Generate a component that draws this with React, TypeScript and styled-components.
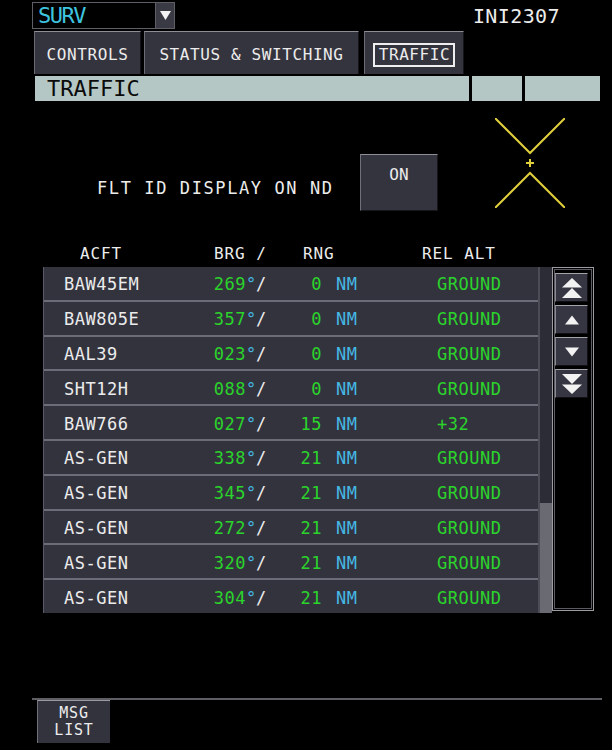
import React from 'react';
import styled, { createGlobalStyle } from 'styled-components';

const GlobalStyle = createGlobalStyle`
  html, body {
    margin: 0;
    padding: 0;
    background: #000;
  }
  body {
    font-family: "DejaVu Sans Mono", "Liberation Mono", monospace;
  }
`;

const GREEN = '#2bd42b';
const CYAN = '#45b9e4';

const Screen = styled.div`
  width: 612px;
  height: 750px;
  background: #000;
  color: #ececec;
  display: flex;
  flex-direction: column;
  overflow: hidden;
`;

/* ---------- top bar ---------- */

const TopBar = styled.div`
  display: flex;
  align-items: flex-start;
  height: 31px;
  padding: 2px 0 0 32px;
  box-sizing: border-box;
`;

const Dropdown = styled.div`
  display: flex;
  width: 143px;
  height: 27px;
  box-sizing: border-box;
  border: 1px solid #5e5e66;
  background: #000;
`;

const DropValue = styled.div`
  flex: 1;
  color: #3ec3df;
  font-size: 22px;
  line-height: 25px;
  letter-spacing: -1.5px;
  padding-left: 5px;
`;

const DropButton = styled.div`
  width: 18px;
  background: #3a3a44;
  border-left: 1px solid #5e5e66;
  display: flex;
  align-items: center;
  justify-content: center;
`;

const StationId = styled.div`
  margin: 2px 52px 0 auto;
  font-size: 20px;
  line-height: 24px;
  letter-spacing: 0.4px;
`;

/* ---------- tabs ---------- */

const TabRow = styled.div`
  display: flex;
  gap: 3px;
  height: 43px;
  padding-left: 34px;
`;

const Tab = styled.div<{ $w: number; $gapLeft?: number }>`
  width: ${(p) => p.$w}px;
  margin-left: ${(p) => p.$gapLeft ?? 0}px;
  box-sizing: border-box;
  background: #34343e;
  border-top: 1px solid #8e8e96;
  border-left: 1px solid #6c6c74;
  border-right: 1px solid #16161a;
  display: flex;
  align-items: center;
  justify-content: center;
  padding-top: 3px;
  font-size: 16px;
  letter-spacing: 0.6px;
  white-space: nowrap;
`;

const ActiveLabel = styled.span`
  border: 2px solid #eeeeee;
  padding: 0 3px 0 4px;
  line-height: 20px;
`;

/* ---------- section bar ---------- */

const SectionBar = styled.div`
  display: flex;
  gap: 3px;
  width: 565px;
  height: 25px;
  margin: 2px 0 0 35px;
`;

const BarCell = styled.div<{ $w: number }>`
  width: ${(p) => p.$w}px;
  background: #b5c7c5;
  color: #0b0b0b;
  font-size: 22px;
  line-height: 25px;
  padding-left: 12px;
  box-sizing: border-box;
`;

/* ---------- option area ---------- */

const OptionArea = styled.div`
  display: flex;
  align-items: flex-start;
  height: 134px;
`;

const OptionLabel = styled.div`
  width: 263px;
  margin: 77px 0 0 97px;
  font-size: 17px;
  line-height: 20px;
  letter-spacing: 1.6px;
  white-space: nowrap;
`;

const ToggleButton = styled.div`
  width: 78px;
  height: 57px;
  margin-top: 53px;
  box-sizing: border-box;
  background: #34343f;
  border-top: 1px solid #8e8e96;
  border-left: 1px solid #70707a;
  border-right: 1px solid #16161a;
  border-bottom: 1px solid #16161a;
  text-align: center;
  padding-top: 12px;
  font-size: 16px;
  line-height: 16px;
`;

const Crosshair = styled.svg`
  margin: 17px 0 0 57px;
  display: block;
`;

/* ---------- table ---------- */

const ColumnHeads = styled.div`
  display: grid;
  grid-template-columns: 134px 89px 119px 1fr;
  height: 32px;
  box-sizing: border-box;
  padding: 4px 0 0 80px;
  align-items: center;
  font-size: 16px;
  letter-spacing: 0.9px;
  white-space: pre;
`;

const TableArea = styled.div`
  display: flex;
  height: 346px;
  margin-left: 43px;
`;

const Rows = styled.div`
  width: 495px;
  display: flex;
  flex-direction: column;
  gap: 2px;
  background: #6c6c78;
  border-left: 1px solid #5a5a66;
  box-sizing: border-box;
`;

const Row = styled.div`
  flex: 1;
  background: #33333e;
  display: grid;
  grid-template-columns: 136px 46px 27px 49px 115px 1fr;
  align-items: center;
  padding: 2px 0 0 20px;
  font-size: 17px;
  letter-spacing: 0.5px;
  white-space: nowrap;
`;

const Cell = styled.span<{ $color?: string; $right?: boolean; $pad?: number }>`
  color: ${(p) => p.$color ?? '#ececec'};
  text-align: ${(p) => (p.$right ? 'right' : 'left')};
  padding-left: ${(p) => p.$pad ?? 0}px;
`;

const Deg = styled.span`
  display: inline-block;
  width: 10px;
  letter-spacing: 0;
  color: ${CYAN};
`;

const Track = styled.div`
  width: 14px;
  display: flex;
  flex-direction: column;
  justify-content: flex-end;
  background: #2c2c36;
  border-left: 2px solid #4c4c56;
  box-sizing: border-box;
`;

const Thumb = styled.div`
  height: 110px;
  background: #6a6a72;
`;

const ScrollPanel = styled.div`
  width: 42px;
  height: 344px;
  box-sizing: border-box;
  border: 1px solid #9c9ca2;
  padding: 1px;
  background: #000;
`;

const ScrollInner = styled.div`
  height: 100%;
  box-sizing: border-box;
  border: 1px solid #5c5c64;
  display: flex;
  flex-direction: column;
  gap: 3px;
  padding-top: 3px;
`;

const ScrollButton = styled.div`
  width: 33px;
  height: 29px;
  box-sizing: border-box;
  background: #363642;
  border-top: 1px solid #a4a4ac;
  border-left: 1px solid #8a8a92;
  border-right: 1px solid #111115;
  border-bottom: 1px solid #111115;
  display: flex;
  align-items: center;
  justify-content: center;
`;

/* ---------- footer ---------- */

const Footer = styled.div`
  margin: auto 0 7px 32px;
  width: 570px;
  border-top: 2px solid #5e5e64;
  padding-left: 5px;
  box-sizing: border-box;
`;

const FooterButton = styled.div`
  width: 73px;
  height: 43px;
  box-sizing: border-box;
  background: #33333e;
  border-top: 1px solid #9a9aa2;
  border-left: 1px solid #70707a;
  display: flex;
  flex-direction: column;
  align-items: center;
  justify-content: center;
  font-size: 15px;
  line-height: 17.5px;
  letter-spacing: 0.8px;
`;

type Traffic = { id: string; brg: string; rng: string; alt: string };

const traffic: Traffic[] = [
  { id: 'BAW45EM', brg: '269', rng: '0', alt: 'GROUND' },
  { id: 'BAW805E', brg: '357', rng: '0', alt: 'GROUND' },
  { id: 'AAL39', brg: '023', rng: '0', alt: 'GROUND' },
  { id: 'SHT12H', brg: '088', rng: '0', alt: 'GROUND' },
  { id: 'BAW766', brg: '027', rng: '15', alt: '+32' },
  { id: 'AS-GEN', brg: '338', rng: '21', alt: 'GROUND' },
  { id: 'AS-GEN', brg: '345', rng: '21', alt: 'GROUND' },
  { id: 'AS-GEN', brg: '272', rng: '21', alt: 'GROUND' },
  { id: 'AS-GEN', brg: '320', rng: '21', alt: 'GROUND' },
  { id: 'AS-GEN', brg: '304', rng: '21', alt: 'GROUND' },
];

const ArrowIcon = ({ dir, double }: { dir: 'up' | 'down'; double?: boolean }) => {
  const flip = dir === 'down' ? 'rotate(180 10 10)' : undefined;
  return (
    <svg width="20" height="20" viewBox="0 0 20 20">
      <g fill="#f2f2f2" transform={flip}>
        {double ? (
          <>
            <polygon points="10,0 20,9.5 0,9.5" />
            <polygon points="10,10 20,20 0,20" />
          </>
        ) : (
          <polygon points="10,5.5 17,14.5 3,14.5" />
        )}
      </g>
    </svg>
  );
};

export default function App() {
  return (
    <Screen>
      <GlobalStyle />

      <TopBar>
        <Dropdown>
          <DropValue>SURV</DropValue>
          <DropButton>
            <svg width="11" height="9" viewBox="0 0 11 9">
              <polygon points="0,0 11,0 5.5,9" fill="#f4f4f4" />
            </svg>
          </DropButton>
        </Dropdown>
        <StationId>INI2307</StationId>
      </TopBar>

      <TabRow>
        <Tab $w={107}>CONTROLS</Tab>
        <Tab $w={215}>STATUS &amp; SWITCHING</Tab>
        <Tab $w={100} $gapLeft={2}>
          <ActiveLabel>TRAFFIC</ActiveLabel>
        </Tab>
      </TabRow>

      <SectionBar>
        <BarCell $w={434}>TRAFFIC</BarCell>
        <BarCell $w={50} />
        <BarCell $w={75} />
      </SectionBar>

      <OptionArea>
        <OptionLabel>FLT ID DISPLAY ON ND</OptionLabel>
        <ToggleButton>ON</ToggleButton>
        <Crosshair width="70" height="90" viewBox="0 0 70 90">
          <g stroke="#e0d03c" strokeWidth="2" fill="none">
            <path d="M0 0 L35 35 L70 0" />
            <path d="M0 90 L35 55 L70 90" />
            <path d="M31 45 H39 M35 41 V49" />
          </g>
        </Crosshair>
      </OptionArea>

      <ColumnHeads>
        <span>ACFT</span>
        <span>BRG /</span>
        <span>RNG</span>
        <span>REL ALT</span>
      </ColumnHeads>

      <TableArea>
        <Rows>
          {traffic.map((t, i) => (
            <Row key={i}>
              <Cell>{t.id}</Cell>
              <Cell $color={GREEN} $right>
                {t.brg}
              </Cell>
              <Cell>
                <Deg>°</Deg>/
              </Cell>
              <Cell $color={GREEN} $right>
                {t.rng}
              </Cell>
              <Cell $color={CYAN} $pad={14}>
                NM
              </Cell>
              <Cell $color={GREEN}>{t.alt}</Cell>
            </Row>
          ))}
        </Rows>
        <Track>
          <Thumb />
        </Track>
        <ScrollPanel>
          <ScrollInner>
            <ScrollButton>
              <ArrowIcon dir="up" double />
            </ScrollButton>
            <ScrollButton>
              <ArrowIcon dir="up" />
            </ScrollButton>
            <ScrollButton>
              <ArrowIcon dir="down" />
            </ScrollButton>
            <ScrollButton>
              <ArrowIcon dir="down" double />
            </ScrollButton>
          </ScrollInner>
        </ScrollPanel>
      </TableArea>

      <Footer>
        <FooterButton>
          <span>MSG</span>
          <span>LIST</span>
        </FooterButton>
      </Footer>
    </Screen>
  );
}
